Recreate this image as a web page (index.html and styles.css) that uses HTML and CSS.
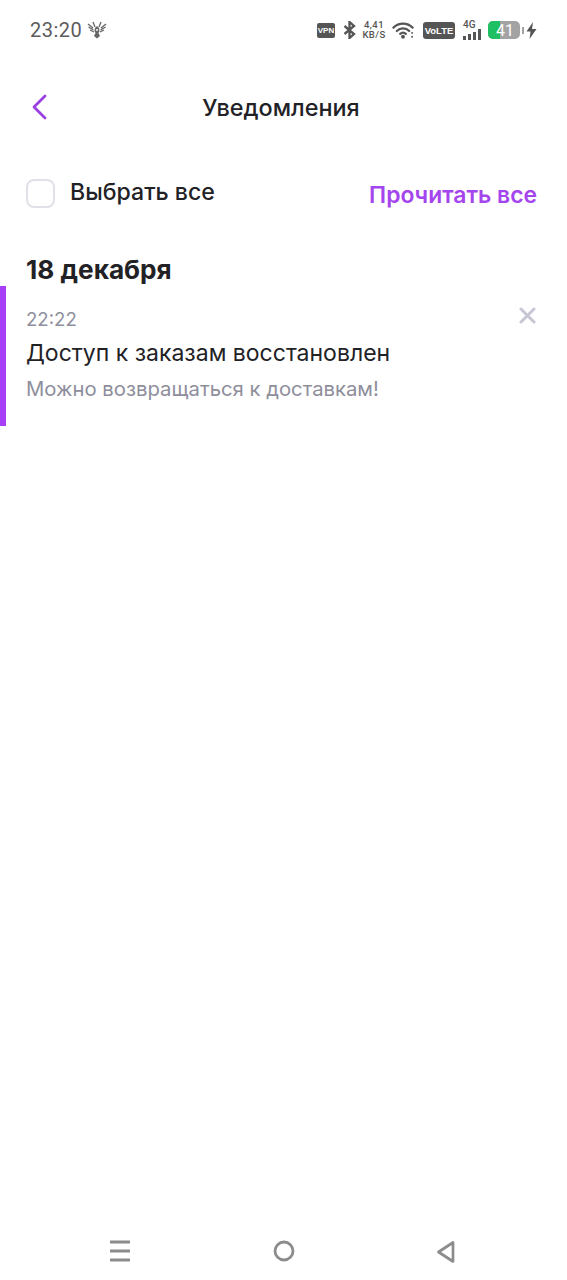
FILE: index.html
```html
<!DOCTYPE html>
<html lang="ru">
<head>
<meta charset="utf-8">
<title>Уведомления</title>
<link rel="stylesheet" href="styles.css">
</head>
<body>
<div class="screen">
  <div class="status">
    <div class="status-left">
      <span class="clock">23:20</span>
      <svg class="eagle" width="20" height="18" viewBox="0 0 20 18"><g fill="none" stroke="#666" stroke-width="1.300"><path d="M1 3l5 4M1.500 6l5 3M3 9l4 2M19 3l-5 4M18.500 6l-5 3M17 9l-4 2M6 1l2 5M14 1l-2 5"/></g><path fill="#666" d="M8 7l2-2 2 2 .5 3-1 2 1.500 3-3 2.500L7 15l1.500-3-1-2z"/><circle cx="10" cy="9" r="1" fill="#fff"/></svg>
    </div>
    <div class="status-right">
      <span class="chip chip-vpn">VPN</span>
      <svg class="bt" width="13" height="18" viewBox="0 0 13 18"><path fill="none" stroke="#555" stroke-width="2.300" d="M1.500 5l9.500 8-4.500 4V1L11 5l-9.500 8"/></svg>
      <span class="speed">4,41<br>KB/S</span>
      <svg class="wifi" width="23" height="18" viewBox="0 0 24 18"><g fill="none" stroke="#555" stroke-width="2.300" stroke-linecap="round"><path d="M1.500 6.500a14 14 0 0 1 20 0"/><path d="M5 10a9 9 0 0 1 13 0"/><path d="M8.500 13a4.500 4.500 0 0 1 6 0"/></g><circle cx="11.500" cy="16" r="2" fill="#555"/><circle cx="21" cy="12" r="1" fill="#555"/><circle cx="21" cy="16" r="1" fill="#555"/></svg>
      <span class="chip chip-volte">VoLTE</span>
      <span class="net">
        <span class="net-label">4G</span>
        <svg width="18" height="11" viewBox="0 0 18 11"><path fill="#555" d="M0 7h3v4H0zM5 5h3v6H5zM10 3h3v8h-3zM15 0h3v11h-3z"/></svg>
      </span>
      <span class="battery"><span class="battery-fill"></span><span class="battery-num">41</span></span>
      <span class="battery-cap"></span>
      <svg class="bolt" width="11" height="17" viewBox="0 0 10 17"><path fill="#555" d="M6.500 0L0 9.500h4L3 17l7-10H5.500z"/></svg>
    </div>
  </div>

  <header class="nav">
    <svg class="back" width="16" height="26" viewBox="0 0 16 26"><path fill="none" stroke="#9a3fe0" stroke-width="2.800" stroke-linecap="round" stroke-linejoin="round" d="M14 2L3 13l11 11"/></svg>
    <h1 class="title">Уведомления</h1>
  </header>

  <div class="actions">
    <label class="select-all"><span class="checkbox"></span><span class="select-label">Выбрать все</span></label>
    <span class="read-all">Прочитать все</span>
  </div>

  <h2 class="date">18 декабря</h2>

  <article class="notice">
    <div class="notice-top">
      <span class="time">22:22</span>
      <svg class="close" width="17" height="17" viewBox="0 0 17 17"><path stroke="#c6c6d4" stroke-width="3" stroke-linecap="round" d="M2 2l13 13M15 2L2 15"/></svg>
    </div>
    <div class="notice-title">Доступ к заказам восстановлен</div>
    <div class="notice-text">Можно возвращаться к доставкам!</div>
  </article>

  <div class="spacer"></div>

  <nav class="softkeys">
    <svg width="22" height="22" viewBox="0 0 22 22"><path stroke="#8c8c8c" stroke-width="3" d="M1 2h20M1 11h20M1 20h20"/></svg>
    <svg width="22" height="22" viewBox="0 0 22 22"><circle cx="11" cy="11" r="9" fill="none" stroke="#8c8c8c" stroke-width="2.800"/></svg>
    <svg width="20" height="24" viewBox="0 0 20 24"><path fill="none" stroke="#8c8c8c" stroke-width="2.700" stroke-linejoin="round" d="M17 2.500v19L2.500 12z"/></svg>
  </nav>
</div>
</body>
</html>
```

FILE: styles.css
```css
* { box-sizing: border-box; }
html, body { margin: 0; padding: 0; background: #fff; }
body { font-family: Inter, "Noto Sans", sans-serif; color: #222226; }
.screen { width: 567px; height: 1280px; display: flex; flex-direction: column; overflow: hidden; }

.status { height: 60px; padding: 0 30px; display: flex; justify-content: space-between; align-items: center; color: #555; }
.status-left { display: flex; align-items: center; gap: 5px; }
.clock { font-family: Roboto, sans-serif; font-size: 20px; letter-spacing: .5px; color: #5c5c5c; }
.status-right { display: flex; align-items: center; }
.chip { background: #555; color: #fff; font-family: "Liberation Sans", sans-serif; font-weight: 700; display: flex; align-items: center; justify-content: center; border-radius: 2px; }
.chip-vpn { width: 18px; height: 15px; font-size: 8px; }
.bt { margin-left: 8px; }
.speed { font-family: Roboto, sans-serif; font-weight: 500; font-size: 9.500px; line-height: 10px; letter-spacing: .4px; text-align: center; width: 24px; margin-left: 6px; }
.wifi { margin-left: 6px; }
.chip-volte { width: 32px; height: 17px; font-size: 9.500px; border-radius: 3px; margin-left: 8px; }
.net { display: flex; flex-direction: column; width: 18px; margin-left: 8px; }
.net-label { font-family: Roboto, sans-serif; font-weight: 500; font-size: 10px; line-height: 8px; }
.battery { position: relative; width: 32px; height: 18px; border-radius: 5px; background: #a3a3a3; overflow: hidden; display: flex; align-items: center; justify-content: center; margin-left: 7px; }
.battery-fill { position: absolute; left: 0; top: 0; bottom: 0; width: 12px; background: #1fbf63; }
.battery-num { position: relative; color: #fff; font-family: Roboto, sans-serif; font-size: 16px; padding-left: 2px; }
.battery-cap { width: 2px; height: 7px; background: #a3a3a3; margin-left: 2px; }
.bolt { margin-left: 2px; }

.nav { position: relative; height: 96px; display: flex; align-items: center; justify-content: center; }
.back { position: absolute; left: 31px; top: 34px; }
.title { margin: 0 0 2px -5px; font-size: 23.400px; font-weight: 500; }

.actions { height: 74px; padding: 0 30px 0 26px; display: flex; justify-content: space-between; align-items: center; }
.select-all { display: flex; align-items: center; gap: 15px; font-size: 23.100px; font-weight: 500; }
.select-label { padding-bottom: 2px; }
.checkbox { width: 29px; height: 29px; border: 2.500px solid #e0e0e8; border-radius: 8px; }
.read-all { font-size: 22.900px; font-weight: 600; color: #a445ee; padding-top: 3px; }

.date { margin: 24px 0 0; padding-left: 26px; font-size: 26.200px; line-height: 32px; font-weight: 700; }

.notice { margin-top: 0; height: 140px; border-left: 6px solid #a63ff5; padding: 19px 31px 0 20px; }
.notice-top { display: flex; justify-content: space-between; align-items: flex-start; height: 28px; }
.time { font-size: 18.600px; line-height: 28px; color: #8e8e9c; }
.close { margin-top: 2px; }
.notice-title { font-size: 23px; line-height: 34px; margin-top: 3px; }
.notice-text { font-size: 20.300px; line-height: 30px; margin-top: 4px; color: #8e8e9c; }

.spacer { flex: 1; }
.softkeys { height: 58px; padding: 18px 111px 0 109px; display: flex; justify-content: space-between; align-items: flex-start; }
```
